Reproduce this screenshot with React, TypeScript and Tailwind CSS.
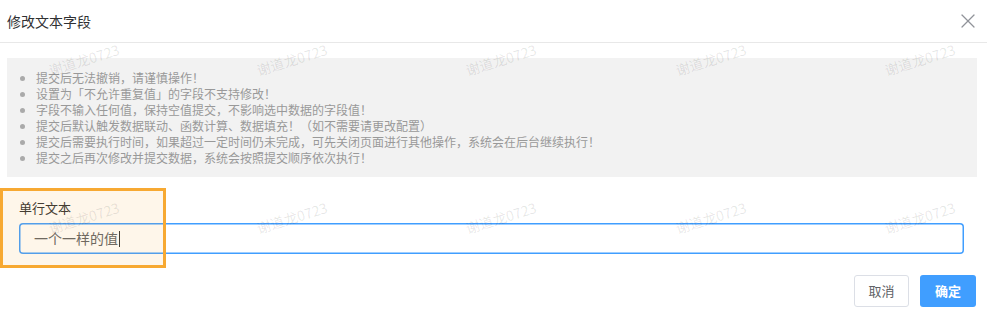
import { X } from "lucide-react";

const tips = [
  "提交后无法撤销，请谨慎操作！",
  "设置为「不允许重复值」的字段不支持修改！",
  "字段不输入任何值，保持空值提交，不影响选中数据的字段值！",
  "提交后默认触发数据联动、函数计算、数据填充！（如不需要请更改配置）",
  "提交后需要执行时间，如果超过一定时间仍未完成，可先关闭页面进行其他操作，系统会在后台继续执行！",
  "提交之后再次修改并提交数据，系统会按照提交顺序依次执行！",
];

// watermark grid (centers)
const marks: { x: number; y: number }[] = [];
for (const y of [60, 218]) {
  for (const x of [84, 292, 501, 711, 920]) marks.push({ x, y });
}

export default function App() {
  return (
    <div className="relative w-[987px] h-[319px] overflow-hidden bg-white font-['Microsoft_YaHei','Noto_Sans_CJK_SC',sans-serif]">
      {/* Header */}
      <div className="flex h-[43px] items-center justify-between border-b border-[#e8e8e8] pl-[7px] pr-[7px]">
        <span className="text-[14px] leading-none text-[#303133]">修改文本字段</span>
        <X className="h-[24px] w-[24px] text-[#909399]" strokeWidth={1.2} />
      </div>

      {/* Tips */}
      <div className="px-[7px] pt-[15px] pr-[10px]">
        <ul className="h-[119px] bg-[#f2f2f2] pt-[12px] pb-[11px] pl-[29px]">
          {tips.map((t) => (
            <li key={t} className="list-disc text-[12px] leading-[16px] text-[#999999] marker:text-[#aaaaaa]">
              {t}
            </li>
          ))}
        </ul>
      </div>

      {/* Field */}
      <div className="pl-[19px] pr-[23px] pt-[21px]">
        <div className="text-[13px] leading-[20px] text-[#303133]">单行文本</div>
        <div className="mt-[5px] flex h-[31px] items-center rounded-[4px] ring-[1.5px] ring-inset ring-[#409eff] pl-[15px]">
          <span className="text-[14px] text-[#606266]">一个一样的值</span>
          <span className="ml-[1px] h-[16px] w-[1px] bg-[#303133]" />
        </div>
      </div>

      {/* Footer */}
      <div className="flex justify-end gap-[11px] pr-[11px] pt-[21px]">
        <button className="h-[32px] w-[55px] rounded-[3px] border border-[#dcdfe6] bg-white text-[13px] text-[#606266]">
          取消
        </button>
        <button className="h-[32px] w-[56px] rounded-[3px] bg-[#409eff] text-[13px] font-bold text-white">
          确定
        </button>
      </div>

      {/* Annotation highlight */}
      <div className="pointer-events-none absolute left-0 top-[188px] h-[80px] w-[166px] border-[3px] border-[#f7a932] bg-[#f7a932]/10" />

      {/* Watermarks */}
      {marks.map((m, i) => (
        <span
          key={i}
          className="pointer-events-none absolute -translate-x-1/2 -translate-y-1/2 -rotate-[17deg] whitespace-nowrap text-[14px] text-black/10"
          style={{ left: m.x, top: m.y }}
        >
          谢道龙0723
        </span>
      ))}
    </div>
  );
}
